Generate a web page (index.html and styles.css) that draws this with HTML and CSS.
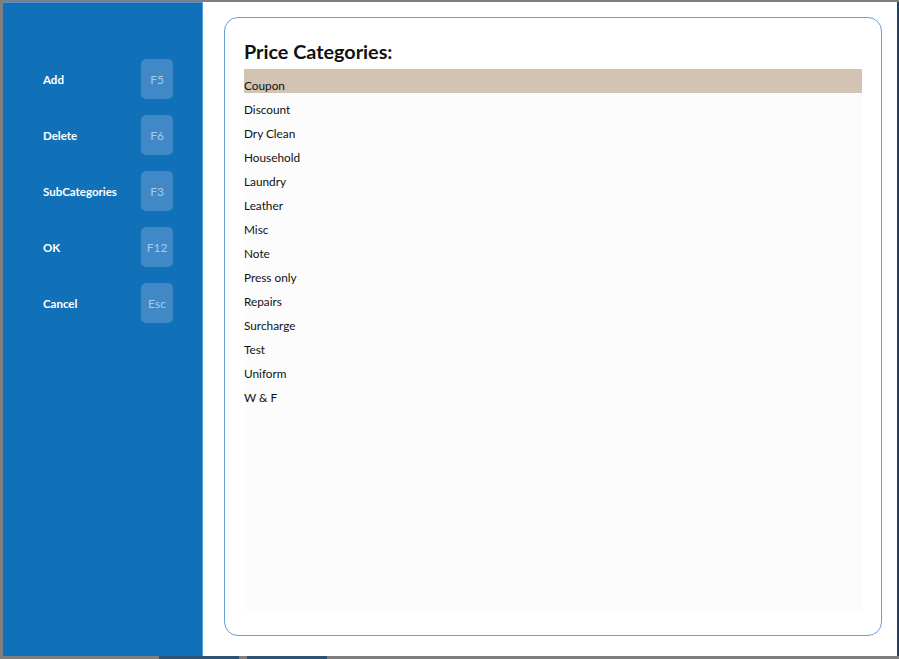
FILE: index.html
```html
<!DOCTYPE html>
<html>
<head>
<meta charset="utf-8">
<link rel="stylesheet" href="styles.css">
</head>
<body>
<div class="window">
  <aside class="sidebar">
    <div class="action"><span class="label">Add</span><span class="key">F5</span></div>
    <div class="action"><span class="label">Delete</span><span class="key">F6</span></div>
    <div class="action"><span class="label">SubCategories</span><span class="key">F3</span></div>
    <div class="action"><span class="label">OK</span><span class="key">F12</span></div>
    <div class="action"><span class="label">Cancel</span><span class="key">Esc</span></div>
  </aside>
  <main class="main">
    <section class="card">
      <h1 class="title">Price Categories:</h1>
      <ul class="list">
        <li class="item selected">Coupon</li>
        <li class="item">Discount</li>
        <li class="item">Dry Clean</li>
        <li class="item">Household</li>
        <li class="item">Laundry</li>
        <li class="item">Leather</li>
        <li class="item">Misc</li>
        <li class="item">Note</li>
        <li class="item">Press only</li>
        <li class="item">Repairs</li>
        <li class="item">Surcharge</li>
        <li class="item">Test</li>
        <li class="item">Uniform</li>
        <li class="item">W &amp; F</li>
      </ul>
    </section>
  </main>
</div>
<div class="bottom">
  <span class="seg seg-a"></span><span class="seg seg-b"></span>
</div>
</body>
</html>
```
FILE: styles.css
```css
html, body {
  margin: 0;
  padding: 0;
}
body {
  width: 899px;
  height: 659px;
  background: #7f7f7f;
  overflow: hidden;
  font-family: Lato, "Open Sans", sans-serif;
  padding-top: 2px;
  padding-left: 3px;
  box-sizing: border-box;
}
.window {
  width: 896px;
  height: 654px;
  display: flex;
  border-right: 2px solid #1f3f66;
  box-sizing: border-box;
  background: #ffffff;
}
.sidebar {
  width: 200px;
  flex: none;
  background: #1171b8;
  border-right: 1px solid #5b9be0;
  border-top: 1px solid #4f92d8;
  box-sizing: border-box;
  padding: 56px 29px 0 40px;
  display: flex;
  flex-direction: column;
  gap: 16px;
}
.action {
  display: flex;
  align-items: center;
  justify-content: space-between;
  height: 40px;
}
.label {
  color: #ffffff;
  font-weight: 700;
  font-size: 11.5px;
}
.key {
  width: 32px;
  height: 40px;
  border-radius: 5px;
  background: #4089c6;
  color: #a9cbea;
  font-size: 12px;
  display: flex;
  align-items: center;
  justify-content: center;
}
.main {
  flex: 1;
  padding: 15px 15px 0 21px;
  background: #ffffff;
}
.card {
  width: 658px;
  height: 619px;
  box-sizing: border-box;
  border: 1px solid #6a9fdc;
  border-radius: 14px;
  padding: 21px 19px 25px 19px;
  display: flex;
  flex-direction: column;
}
.title {
  margin: 0 0 6px 0;
  font-size: 19.8px;
  line-height: 24px;
  font-weight: 700;
  color: #111111;
}
.list {
  list-style: none;
  margin: 0;
  padding: 0;
  flex: 1;
  background: #fcfcfc;
}
.item {
  height: 24px;
  box-sizing: border-box;
  padding-top: 9px;
  line-height: 15px;
  font-size: 11.8px;
  color: #111111;
}
.item.selected {
  background: #d3c3b3;
}
.bottom {
  height: 3px;
  margin-left: -3px;
  position: relative;
}
.seg {
  position: absolute;
  top: 0;
  height: 3px;
  background: #2f5173;
}
.seg-a { left: 159px; width: 80px; }
.seg-b { left: 247px; width: 80px; }
```
